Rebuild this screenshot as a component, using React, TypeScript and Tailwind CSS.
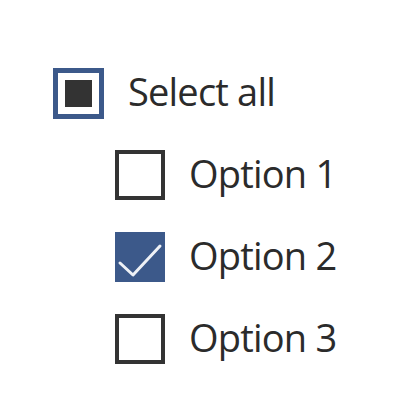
import React from "react";

const font = { fontFamily: '"Open Sans", "Noto Sans", sans-serif' };

function Box({ state }: { state: "off" | "on" | "mixed" }) {
  if (state === "on") {
    return (
      <span className="flex h-[50px] w-[50px] shrink-0 items-center justify-center bg-[#3c598a]">
        <svg width="50" height="50" viewBox="0 0 50 50" fill="none">
          <path d="M5 31 L18 43 L45 14" stroke="#eef1f6" strokeWidth="3" strokeLinecap="round" strokeLinejoin="round" />
        </svg>
      </span>
    );
  }
  if (state === "mixed") {
    return (
      <span className="flex h-[51px] w-[51px] shrink-0 items-center justify-center border-[5px] border-[#3c598a] bg-white">
        <span className="h-[27px] w-[27px] bg-[#333333]" />
      </span>
    );
  }
  return <span className="h-[50px] w-[50px] shrink-0 border-4 border-[#333333] bg-white" />;
}

function Row({ label, state }: { label: string; state: "off" | "on" | "mixed" }) {
  return (
    <div className="flex h-[82px] items-center gap-[24px]">
      <Box state={state} />
      <span className="mb-[5px] text-[38px] leading-none tracking-[-0.8px] text-[#2b2b2b]" style={font}>
        {label}
      </span>
    </div>
  );
}

export default function App() {
  return (
    <div className="h-[416px] w-[414px] bg-white pl-[53px] pt-[52px]">
      <Row label="Select all" state="mixed" />
      <div className="flex flex-col pl-[62px]">
        <Row label="Option 1" state="off" />
        <Row label="Option 2" state="on" />
        <Row label="Option 3" state="off" />
      </div>
    </div>
  );
}
